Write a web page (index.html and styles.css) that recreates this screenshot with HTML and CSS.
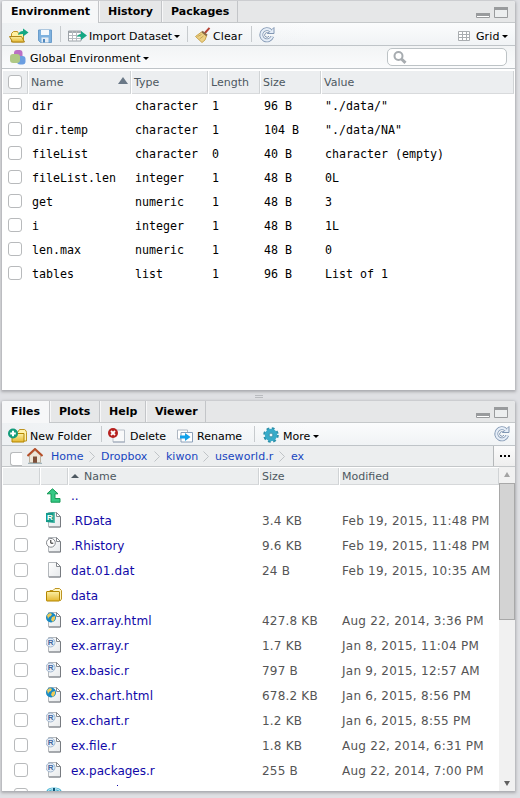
FILE: index.html
```html
<!DOCTYPE html>
<html lang="en">
<head>
<meta charset="utf-8">
<title>Workspace</title>
<link rel="stylesheet" href="styles.css">
</head>
<body>
<svg class="defs" width="0" height="0" aria-hidden="true">
  <defs>
    <linearGradient id="gold" x1="0" y1="0" x2="0" y2="1"><stop offset="0" stop-color="#fbf0a6"/><stop offset="1" stop-color="#e5b72f"/></linearGradient>
    <linearGradient id="sheet" x1="0" y1="0" x2="1" y2="1"><stop offset="0" stop-color="#fff"/><stop offset="1" stop-color="#e6e9eb"/></linearGradient>
    <symbol id="page" viewBox="0 0 16 16"><path d="M2.500.500h8l4 4v10.500h-12z" fill="url(#sheet)" stroke="#b4b8bc"/><path d="M14.500 5v10H3" fill="none" stroke="#777b80"/><path d="M10.500.500v4h4z" fill="#fff" stroke="#85898e"/></symbol>
    <symbol id="folder" viewBox="0 0 16 16"><path d="M2.500 5l1.500-1.500h3l2-2h4.500l2 2V12L14 14" fill="#fff6c2" stroke="#bd9422"/><path d="M.5 5q0-.5.5-.5h12q.5 0 .5.5v8.500q0 .5-.5.5H1q-.5 0-.5-.5z" fill="url(#gold)" stroke="#b38600"/></symbol>
    <symbol id="rfile" viewBox="0 0 16 16"><use href="#page" x="0" y="0" width="16" height="16"/><circle cx="4.500" cy="5.500" r="4.500" fill="#e6edf5" stroke="#8fa8c5" stroke-width=".8"/><text x="1.800" y="8.400" class="glyph blue">R</text></symbol>
    <symbol id="html" viewBox="0 0 16 16"><use href="#page" width="16" height="16"/><circle cx="5" cy="5.500" r="5" fill="#1689c4"/><path d="M1 3l3-2 2 1-1 2-2 1-1 2zM6 5l3-1v3L7 10 5 8z" fill="#edcb59"/></symbol>
    <symbol id="rdata" viewBox="0 0 16 16"><use href="#page" width="16" height="16"/><path d="M0 1l9-1v11l-9-1z" fill="#159b89"/><path d="M7.500.200L9 0v11l-1.500-.2z" fill="#5cc0b0"/><text x="1" y="8.200" class="glyph white">R</text></symbol>
    <symbol id="hist" viewBox="0 0 16 16"><use href="#page" width="16" height="16"/><circle cx="4.900" cy="5.800" r="4.400" fill="#fff" stroke="#83878c"/><path d="M4.800 3v3.200h2.500" fill="none" stroke="#222"/></symbol>
    <symbol id="refresh" viewBox="0 0 16 16"><path d="M13.200 9.500A5.600 5.600 0 1 1 12 4" fill="none" stroke="#8297b3" stroke-width="3.800"/><path d="M8.500 6.500h6.500V.500L13 2.500z" fill="#e5edf7" stroke="#8297b3"/><path d="M13.200 9.500A5.600 5.600 0 1 1 12 4" fill="none" stroke="#e5edf7" stroke-width="2.200"/><path d="M10 9A2.300 2.300 0 1 1 9 5.900" fill="none" stroke="#8297b3"/></symbol>
    <symbol id="wins" viewBox="0 0 34 13"><path d="M.5 7.500h13v4H.5z" fill="#fff" stroke="#999b9d"/><path d="M0 7h14v3H0z" fill="#999b9d"/><path d="M18.500 1.500h13v10h-13z" fill="#eceeef" stroke="#999b9d"/><path d="M18 1h14v3H18z" fill="#999b9d"/></symbol>
  </defs>
</svg>
<main class="desk">
  <section class="pane env">
    <div class="tabs"><b class="tab on t1">Environment</b><b class="tab t2">History</b><b class="tab t3">Packages</b><svg class="wins" width="34" height="13"><use href="#wins"/></svg></div>
    <div class="bar">
      <svg class="ic i-open" width="20" height="16"><path d="M2.500 14V5.500l2-2h4l1 2h5V14z" fill="#fff0a0" stroke="#bd9422"/><path d="M.5 8.500h12l3 5.500h-12z" fill="url(#gold)" stroke="#ad861d"/><path d="M9 7q1-4 5-4V.500l5.500 4-5.500 4V6q-3 0-5 1z" fill="#15a884"/></svg>
      <svg class="ic i-save" width="14" height="14"><path d="M.5 1h13v12.500h-11l-2-2z" fill="#7db1df" stroke="#6b9dcb"/><path d="M3 1h8v5H3z" fill="#f4f8fc"/><path d="M3.500 8.500h7v5h-7z" fill="#e7edf4"/><path d="M5 10h2v3.500H5z" fill="#4f87bd"/></svg>
      <i class="sep s1"></i>
      <svg class="ic i-imp" width="20" height="14"><path d="M.5 2h12.500v10H.5z" fill="#fff" stroke="#9ba1a6"/><path d="M1 3h12" stroke="#a5abb0" stroke-width="2"/><path d="M1 6.500h12M1 9.500h12M4.500 2v10M8.500 2v10" stroke="#b5babf"/><path d="M9 8q1-3 4-3V2l6 4.500-6 4.500V8q-2-1-4 0z" fill="#15a884"/></svg>
      <span class="lbl l-imp">Import Dataset</span><i class="caret"></i>
      <i class="sep s2"></i>
      <svg class="ic i-broom" width="16" height="16"><path d="M9.500 6.500L14.500.800" stroke="#b54334" stroke-width="2"/><path d="M6.500 5l5 4-1.500 4-3 2.500L.5 9.500z" fill="#ecd184" stroke="#c9a550"/><path d="M7 4.500l5 4" stroke="#8a6b48" stroke-width="2"/><path d="M2.500 9.500l4-2M4.500 12l4-3" stroke="#c09a48" stroke-width=".8"/></svg>
      <span class="lbl l-clear">Clear</span><i class="sep s3"></i>
      <svg class="ic i-ref" width="16" height="16"><use href="#refresh"/></svg>
      <svg class="ic i-grid" width="12" height="11"><path d="M.5.500h11v9H.5zM.5 3.500h11M.5 6.500h11M4.500.500v9M8.500.500v9" fill="#fff" stroke="#a9adb0"/></svg>
      <span class="lbl l-grid">Grid</span><i class="caret"></i>
    </div>
    <div class="bar second">
      <svg class="ic i-glob" width="16" height="16"><rect x="4" y="0" width="8.500" height="9" rx="3" fill="#ba70c5"/><rect x="7" y="6" width="8.500" height="8.500" rx="3" fill="#6b9ee1"/><rect x="0" y="4" width="10" height="9" rx="3" fill="#afc986"/></svg>
      <span class="lbl l-glob">Global Environment</span><i class="caret"></i>
      <div class="search"><svg width="14" height="14"><circle cx="5.500" cy="5" r="4" fill="none" stroke="#a7acb0" stroke-width="2"/><path d="M8.500 8l4 3.800" stroke="#a7acb0" stroke-width="3"/></svg></div>
    </div>
    <div class="erow head"><span><i class="cb"></i></span><span>Name<i class="sort"></i></span><span>Type</span><span>Length</span><span>Size</span><span>Value</span></div>
    <div class="erow"><span><i class="cb"></i></span><span>dir</span><span>character</span><span>1</span><span>96 B</span><span>"./data/"</span></div>
    <div class="erow"><span><i class="cb"></i></span><span>dir.temp</span><span>character</span><span>1</span><span>104 B</span><span>"./data/NA"</span></div>
    <div class="erow"><span><i class="cb"></i></span><span>fileList</span><span>character</span><span>0</span><span>40 B</span><span>character (empty)</span></div>
    <div class="erow"><span><i class="cb"></i></span><span>fileList.len</span><span>integer</span><span>1</span><span>48 B</span><span>0L</span></div>
    <div class="erow"><span><i class="cb"></i></span><span>get</span><span>numeric</span><span>1</span><span>48 B</span><span>3</span></div>
    <div class="erow"><span><i class="cb"></i></span><span>i</span><span>integer</span><span>1</span><span>48 B</span><span>1L</span></div>
    <div class="erow"><span><i class="cb"></i></span><span>len.max</span><span>numeric</span><span>1</span><span>48 B</span><span>0</span></div>
    <div class="erow"><span><i class="cb"></i></span><span>tables</span><span>list</span><span>1</span><span>96 B</span><span>List of 1</span></div>
  </section>
  <div class="grip"><i></i></div>
  <section class="pane files">
    <div class="tabs"><b class="tab on f1">Files</b><b class="tab f2">Plots</b><b class="tab f3">Help</b><b class="tab f4">Viewer</b><svg class="wins" width="34" height="13"><use href="#wins"/></svg></div>
    <div class="bar">
      <svg class="ic i-new" width="20" height="15"><path d="M4.500 13V4.500h5l2-3h5q2 1 2 3V13z" fill="#fff2ad" stroke="#bd9422"/><path d="M4 5.500h12V14H4z" fill="url(#gold)" stroke="#b38600"/><circle cx="5" cy="5.500" r="5" fill="#149c7b"/><path d="M5 2.700v5.600M2.200 5.500h5.600" stroke="#fff" stroke-width="2"/></svg>
      <span class="lbl l-new">New Folder</span><i class="sep q1"></i>
      <svg class="ic i-del" width="18" height="15"><path d="M5 2h11.500v12H5z" fill="#f8f9fa" stroke="#b9c0c9"/><path d="M5 14h12" stroke="#9da8b9"/><circle cx="5" cy="5" r="5" fill="#b6211f"/><path d="M3 3l4 4M7 3L3 7" stroke="#fff" stroke-width="1.800"/></svg>
      <span class="lbl l-del">Delete</span>
      <svg class="ic i-ren" width="16" height="14"><path d="M.5 1h10v9H.5z" fill="#fff" stroke="#aeb7c2"/><path d="M4 3.500h11.500V13H4z" fill="#fff" stroke="#8ba0b9"/><path d="M3 6.500h5V4l5.500 4L8 12V9.500H3z" fill="#12a1ea"/></svg>
      <span class="lbl l-ren">Rename</span><i class="sep q2"></i>
      <svg class="ic i-gear" width="16" height="16"><circle cx="8" cy="8" r="6.300" fill="none" stroke="#2c90aa" stroke-width="3" stroke-dasharray="2.600 2.348"/><circle cx="8" cy="8" r="4.200" fill="none" stroke="#38abc9" stroke-width="4"/><circle cx="8" cy="8" r="2" fill="#f0f8fb" stroke="#2688a2"/></svg>
      <span class="lbl l-more">More</span><i class="caret"></i>
      <svg class="ic i-ref2" width="16" height="16"><use href="#refresh"/></svg>
    </div>
    <div class="crumbs">
      <i class="cb"></i>
      <svg class="home" width="16" height="16"><path d="M2.500 7.500L8 2.500l5.500 5v7h-11z" fill="#eee7d9" stroke="#bdb3a2"/><path d="M6 8.500h4v6.500H6z" fill="#7e5039"/><path d="M.5 8L8 1l7.500 7" fill="none" stroke="#b54f28" stroke-width="2"/><path d="M1 15.300h14" stroke="#8fa5ad"/></svg>
      <a class="c1">Home</a><svg class="chev" width="6" height="11"><path d="M.5.500l5 5-5 5"/></svg><a class="c2">Dropbox</a><svg class="chev" width="6" height="11"><path d="M.5.500l5 5-5 5"/></svg><a class="c3">kiwon</a><svg class="chev" width="6" height="11"><path d="M.5.500l5 5-5 5"/></svg><a class="c4">useworld.r</a><svg class="chev" width="6" height="11"><path d="M.5.500l5 5-5 5"/></svg><a>ex</a>
      <span class="dots"><i></i><i></i><i></i></span>
    </div>
    <div class="list">
      <div class="rows">
        <div class="frow fhead"><span></span><span></span><span><i class="sort small"></i>Name</span><span>Size</span><span>Modified</span></div>
        <div class="frow up"><span></span><span><svg width="16" height="16"><path d="M6.500.800l5.500 5H9v4.700h5v3.700H5V5.800H1z" fill="#35c985" stroke="#169956"/></svg></span><span>..</span><span></span><span></span></div>
        <div class="frow"><span><i class="cb"></i></span><span><svg width="16" height="16"><use href="#rdata"/></svg></span><span>.RData</span><span>3.4 KB</span><span>Feb 19, 2015, 11:48 PM</span></div>
        <div class="frow"><span><i class="cb"></i></span><span><svg width="16" height="16"><use href="#hist"/></svg></span><span>.Rhistory</span><span>9.6 KB</span><span>Feb 19, 2015, 11:48 PM</span></div>
        <div class="frow"><span><i class="cb"></i></span><span><svg width="16" height="16"><use href="#page"/></svg></span><span class="wide">dat.01.dat</span><span>24 B</span><span>Feb 19, 2015, 10:35 AM</span></div>
        <div class="frow"><span><i class="cb"></i></span><span><svg width="16" height="16"><use href="#folder"/></svg></span><span>data</span><span></span><span></span></div>
        <div class="frow"><span><i class="cb"></i></span><span><svg width="16" height="16"><use href="#html"/></svg></span><span class="wide">ex.array.html</span><span>427.8 KB</span><span>Aug 22, 2014, 3:36 PM</span></div>
        <div class="frow"><span><i class="cb"></i></span><span><svg width="16" height="16"><use href="#rfile"/></svg></span><span class="wide">ex.array.r</span><span>1.7 KB</span><span>Jan 8, 2015, 11:04 PM</span></div>
        <div class="frow"><span><i class="cb"></i></span><span><svg width="16" height="16"><use href="#rfile"/></svg></span><span>ex.basic.r</span><span>797 B</span><span>Jan 9, 2015, 12:57 AM</span></div>
        <div class="frow"><span><i class="cb"></i></span><span><svg width="16" height="16"><use href="#html"/></svg></span><span class="wide">ex.chart.html</span><span>678.2 KB</span><span>Jan 6, 2015, 8:56 PM</span></div>
        <div class="frow"><span><i class="cb"></i></span><span><svg width="16" height="16"><use href="#rfile"/></svg></span><span>ex.chart.r</span><span>1.2 KB</span><span>Jan 6, 2015, 8:55 PM</span></div>
        <div class="frow"><span><i class="cb"></i></span><span><svg width="16" height="16"><use href="#rfile"/></svg></span><span>ex.file.r</span><span>1.8 KB</span><span>Aug 22, 2014, 6:31 PM</span></div>
        <div class="frow"><span><i class="cb"></i></span><span><svg width="16" height="16"><use href="#rfile"/></svg></span><span>ex.packages.r</span><span>255 B</span><span>Aug 22, 2014, 7:00 PM</span></div>
        <div class="frow"><span><i class="cb"></i></span><span><svg width="16" height="16"><ellipse cx="8" cy="4" rx="7.500" ry="3.500" fill="#4bb4d3"/><path d="M2 3.500q6-4 12 0M5 5l3-4 3 4" fill="none" stroke="#c9f0fa"/><path d="M8 1v5" stroke="#0b5376" stroke-width="2"/></svg></span><span class="cut"><i></i></span><span></span><span></span></div>
      </div>
      <div class="scroll"><i class="up-arrow"></i><div class="thumb"></div><i class="down-arrow"></i></div>
    </div>
  </section>
</main>
</body>
</html>
```

FILE: styles.css
```css
* { box-sizing: border-box; }
body { margin: 0; width: 520px; height: 798px; overflow: hidden; background: #dfe0e4; font: 11px "DejaVu Sans", sans-serif; color: #000; }
.defs { display: block; position: absolute; }
.desk { padding: 1px 5px 0 2px; height: 798px; }
.pane { background: #fff; width: 513px; overflow: hidden; box-shadow: 0 1px 3px 1px #a9aaae; border-radius: 2px 2px 0 0; }
.env { height: 389px; }
.files { height: 390px; display: flex; flex-direction: column; }
.grip { height: 11px; display: flex; justify-content: center; align-items: center; }
.grip i { width: 8px; height: 3px; margin-top: 2px; border: solid #b9bbbf; border-width: 1px 0; }
.tabs { height: 22px; flex: none; display: flex; background: #e6e7e8; border-bottom: 1px solid #c5c8ca; }
.tab { height: 21px; line-height: 22px; padding-left: 9px; border-right: 1px solid #c3c5c8; box-shadow: inset 1px 0 #f7f7f8; white-space: nowrap; }
.tab.on { background: #f6f7f8; height: 22px; }
.t1 { width: 97px; } .t2 { width: 63px; } .t3 { width: 76px; }
.f1 { width: 48px; } .f2 { width: 50px; } .f3 { width: 46px; } .f4 { width: 60px; }
.wins { margin: 5px 5px 0 auto; }
.bar { height: 23px; flex: none; display: flex; align-items: center; padding-top: 3px; background: linear-gradient(90deg, #eef1f3, #fff0 60%), linear-gradient(#fbfcfd, #f0f3f5); border-bottom: 1px solid #bfc4c8; }
.ic, .sep, .lbl, .caret { flex: none; }
.lbl { white-space: nowrap; line-height: 18px; margin-top: 3px; }
.sep { width: 1px; height: 16px; background: #c7cbce; margin-top: -3px; }
.caret { width: 0; height: 0; margin: 2px 0 0 1px; border: 3px solid transparent; border-top: 3px solid #000; border-bottom: 0; }
.i-open { margin-left: 7px; } .i-save { margin-left: 9px; } .s1 { margin-left: 8px; } .i-imp { margin-left: 7px; }
.l-imp { margin-left: 1px; width: 84px; } .s2 { margin-left: 7px; } .i-broom { margin: -2px 0 0 7px; } .l-clear { margin-left: 2px; width: 30px; letter-spacing: .1px; } .s3 { margin-left: 8px; } .i-ref { margin: -2px 0 0 7px; }
.i-grid { margin: 1px 0 0 auto; } .l-grid { margin-left: 6px; width: 25px; letter-spacing: .1px; } .l-grid + .caret { margin-right: 7px; }
.i-new { margin-left: 6px; } .l-new { margin-left: 2px; width: 62px; } .q1 { margin-left: 9px; }
.i-del { margin-left: 6px; } .l-del { margin-left: 4px; width: 36px; }
.i-ren { margin-left: 11px; } .l-ren { margin-left: 4px; width: 47px; } .q2 { margin-left: 10px; }
.i-gear { margin: -1px 0 0 8px; } .l-more { margin-left: 4px; width: 29px; } .i-ref2 { margin: -4px 5px 0 auto; }
.second { padding-top: 1px; background: linear-gradient(#f2f4f5, #fafbfc); }
.i-glob { margin-left: 8px; } .l-glob { margin: 2px 0 0 4px; width: 112px; letter-spacing: .1px; }
.search { width: 120px; height: 18px; margin: -1px 8px 0 auto; background: #fff; border: 1px solid #bdc3c6; border-radius: 5px; padding: 2px 5px; display: flex; }
.erow { height: 24px; display: grid; grid-template-columns: 26px 103px 77px 52px 61px 194px; align-items: center; font: 11.63px "DejaVu Sans Mono", monospace; color: #000; }
.erow span { padding-left: 4px; white-space: pre; display: flex; align-items: center; height: 24px; }
.erow span:first-child { padding: 0 0 2px 6px; }
.erow.head { font: 11px "DejaVu Sans", sans-serif; color: #4d5861; height: 23px; margin-top: 2px; padding-left: 1px; grid-template-columns: 26px 103px 77px 52px 61px 193px; align-items: start; }
.head span { background: #eceef0; border-right: 1px solid #d0d3d5; height: 23px; border-bottom: 1px solid #d8dadc; margin-right: 1px; padding-left: 2px; }
.erow.head span:first-child { padding: 0 0 0 5px; }
.erow.head span { padding-left: 2px; }
.cb { width: 14px; height: 14px; flex: none; border: 1px solid #b8babc; border-radius: 3px; background: #fff; display: block; }
.sort { border: 5px solid transparent; border-top: 0; border-bottom: 7px solid #6a7887; margin: -3px 2px 0 auto; }
.crumbs { height: 21px; flex: none; display: flex; align-items: center; background: #eceeef; border-bottom: 1px solid #c4c7c9; overflow: hidden; }
.crumbs .cb { margin: 6px 0 0 8px; width: 12px; border-right: 0; border-radius: 3px 0 0 3px; }
.home { margin-left: 5px; flex: none; }
.crumbs a { color: #1846c0; font-size: 11px; flex: none; }
.c1 { margin-left: 8px; width: 33px; } .c2 { width: 48px; } .c3 { width: 32px; } .c4 { width: 59px; letter-spacing: .05px; }
.chev { margin: 0 6px 0 5px; flex: none; fill: none; stroke: #bfc3c6; }
.dots { margin-left: auto; width: 22px; height: 20px; background: linear-gradient(#fbfbfb, #eee); border-left: 1px solid #b5b8ba; display: flex; gap: 2px; align-items: center; justify-content: center; }
.dots i { width: 2px; height: 2px; background: #000; }
.list { flex: 1; display: flex; min-height: 0; }
.rows { width: 497px; overflow: hidden; }
.frow { height: 25px; display: grid; grid-template-columns: 38px 28px 191px 80px 160px; font-size: 12px; color: #555; }
.frow span { display: flex; align-items: center; white-space: nowrap; padding-left: 3px; }
.frow span:first-child { padding: 0 0 1px 12px; }
.frow span:nth-child(2) { padding: 0 0 1px 6px; }
.frow span:nth-child(3) { color: #1008a8; }
.frow span:nth-child(4) { letter-spacing: .2px; }
.frow span:nth-child(5) { letter-spacing: .25px; }
.frow span.wide { letter-spacing: .13px; }
.frow.fhead { height: 16px; margin-top: 1px; font-size: 11px; padding-left: 1px; }
.frow.fhead span { height: 17px; margin-right: 1px; background: #eceeef; border-right: 1px solid #d0d3d5; border-bottom: 1px solid #d6d8da; color: #4d5861; padding: 0 0 0 2px; letter-spacing: 0; }
.sort.small { border-width: 0 4px 4px; border-bottom-color: #4d5861; margin: 0 5px 0 0; }
.frow.up { height: 24px; }
.scroll { width: 16px; background: #f1f1f1; display: flex; flex-direction: column; align-items: center; }
.up-arrow { border: 3px solid transparent; border-top: 0; border-bottom: 5px solid #a3a3a3; margin: 5px 0 6px; }
.thumb { width: 16px; height: 137px; background: #d3d3d3; border: 1px solid #a8a8a8; }
.down-arrow { border: 3px solid transparent; border-bottom: 0; border-top: 5px solid #606060; margin: auto 0 5px; }
.glyph { font: bold 8px "Liberation Sans", sans-serif; } .blue { fill: #4468a0; } .white { fill: #fff; }
.cut i { width: 1px; height: 1px; background: #1008a8; margin: -20px 0 0 46px; }
```
